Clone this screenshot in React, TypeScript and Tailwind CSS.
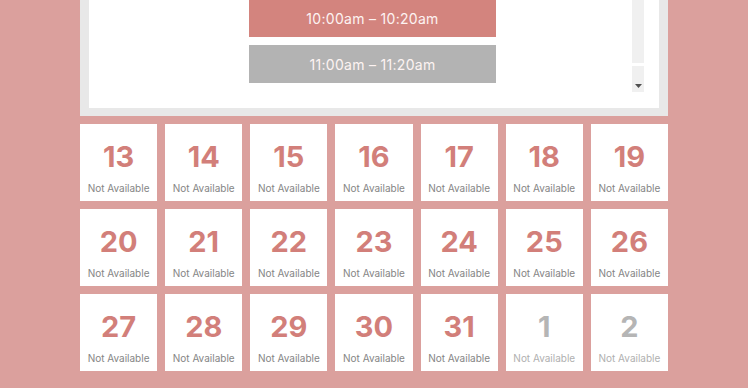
import React from "react";

interface Day {
  num: number;
  muted?: boolean;
}

const days: Day[] = [
  ...Array.from({ length: 19 }, (_, i) => ({ num: i + 13 })),
  { num: 1, muted: true },
  { num: 2, muted: true },
];

const slots = [
  { label: "10:00am – 10:20am", active: true },
  { label: "11:00am – 11:20am", active: false },
];

export default function App() {
  return (
    <div
      className="w-[748px] h-[388px] overflow-hidden bg-[#dba09d] pl-[80px]"
      style={{ fontFamily: "Inter, 'Open Sans', sans-serif" }}
    >
      <div className="w-[588px]">
        {/* time picker panel */}
        <div className="border-x-[9px] border-b-[8px] border-[#e8e8e8] bg-white pb-[16px]">
          <div className="flex h-[92px]">
            <div className="flex-1 flex flex-col gap-[8px] pl-[160px] pr-[136px]">
              {slots.map((s) => (
                <button
                  key={s.label}
                  className={`w-[247px] text-[14px] text-[#fdf3f2] tracking-[0.3px] ${
                    s.active ? "bg-[#d3847e] h-[37px]" : "bg-[#b3b3b3] h-[38px]"
                  }`}
                >
                  {s.label}
                </button>
              ))}
            </div>
            {/* scrollbar */}
            <div className="w-[13px] flex flex-col mr-[15px]">
              <div className="h-[63px] bg-[#f0f0f0]" />
              <div className="h-[3px]" />
              <div className="flex-1 bg-[#f0f0f0] flex items-end justify-center pb-[4px]">
                <svg width="7" height="4" viewBox="0 0 7 4">
                  <path d="M0 0 L7 0 L3.5 4 Z" fill="#505050" />
                </svg>
              </div>
            </div>
          </div>
        </div>

        {/* calendar days */}
        <div className="grid grid-cols-7 gap-[8px] mt-[8px]">
          {days.map((d) => (
            <div
              key={`${d.num}-${d.muted ? "n" : "c"}`}
              className="h-[77px] bg-white flex flex-col items-center pt-[16px]"
            >
              <span
                className={`text-[29px] leading-[34px] font-bold ${
                  d.muted ? "text-[#b5b5b5]" : "text-[#d27f7a]"
                }`}
              >
                {d.num}
              </span>
              <span
                className={`mt-[8px] text-[10px] leading-[12px] ${
                  d.muted ? "text-[#b0b0b0]" : "text-[#858585]"
                }`}
              >
                Not Available
              </span>
            </div>
          ))}
        </div>
      </div>
    </div>
  );
}
